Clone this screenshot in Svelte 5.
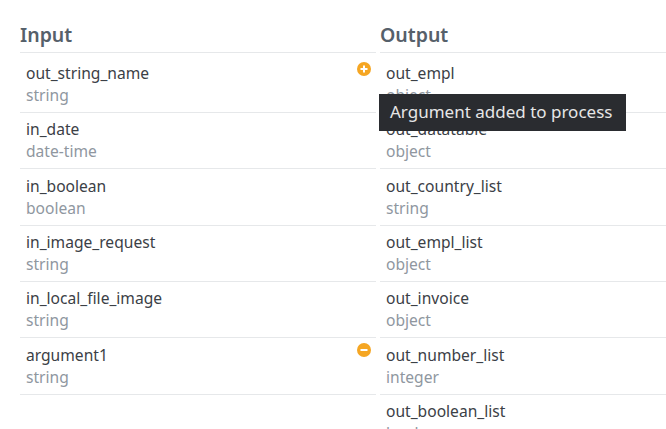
<script>
  const inputs = [
    { name: 'out_string_name', type: 'string', badge: 'plus' },
    { name: 'in_date', type: 'date-time' },
    { name: 'in_boolean', type: 'boolean' },
    { name: 'in_image_request', type: 'string' },
    { name: 'in_local_file_image', type: 'string' },
    { name: 'argument1', type: 'string', badge: 'minus' },
  ];
  const outputs = [
    { name: 'out_empl', type: 'object' },
    { name: 'out_datatable', type: 'object' },
    { name: 'out_country_list', type: 'string' },
    { name: 'out_empl_list', type: 'object' },
    { name: 'out_invoice', type: 'object' },
    { name: 'out_number_list', type: 'integer' },
    { name: 'out_boolean_list', type: 'boolean' },
  ];
</script>

{#snippet column(title, items)}
  <section class="col">
    <h2>{title}</h2>
    <ul>
      {#each items as item}
        <li>
          <div class="name">{item.name}</div>
          <div class="type">{item.type}</div>
          {#if item.badge}
            <svg class="badge" viewBox="0 0 14 14" width="14" height="14" aria-hidden="true">
              <circle cx="7" cy="7" r="7" fill="#f5a623" />
              {#if item.badge === 'plus'}
                <path d="M3.5 7h7M7 3.5v7" stroke="#fff" stroke-width="2" />
              {:else}
                <path d="M3.5 7h7" stroke="#fff" stroke-width="2" />
              {/if}
            </svg>
          {/if}
        </li>
      {/each}
    </ul>
  </section>
{/snippet}

<main class="page">
  {@render column('Input', inputs)}
  {@render column('Output', outputs)}
  <div class="tooltip">Argument added to process</div>
</main>

<style>
  :global(body) {
    margin: 0;
    background: #fff;
    overflow: hidden;
  }
  .page {
    position: relative;
    height: 429px;
    overflow: hidden;
    display: grid;
    grid-template-columns: 356px 306px;
    column-gap: 4px;
    padding-left: 20px;
    font-family: "Noto Sans", sans-serif;
    box-sizing: border-box;
  }
  .col {
    min-width: 0;
  }
  h2 {
    margin: 0;
    padding-top: 20px;
    height: 32px;
    font-size: 19.5px;
    line-height: 29px;
    font-weight: 600;
    color: #56606a;
    border-bottom: 1px solid #e6e8ea;
  }
  ul {
    list-style: none;
    margin: 0;
    padding: 0;
  }
  li {
    position: relative;
    height: 55.33px;
    padding-left: 6px;
    border-bottom: 1px solid #e6e8ea;
  }
  li:first-child {
    box-sizing: border-box;
    height: 60px;
    padding-top: 4px;
  }
  .name {
    padding-top: 5.45px;
    font-size: 15.6px;
    line-height: 22px;
    color: #3b4046;
  }
  .type {
    font-size: 15.6px;
    line-height: 22px;
    color: #8f979f;
  }
  .badge {
    position: absolute;
    right: 5px;
    top: 5px;
  }
  li:first-child .badge {
    top: 9px;
  }
  .tooltip {
    position: absolute;
    left: 379px;
    top: 94px;
    width: 247px;
    height: 37px;
    box-sizing: border-box;
    padding-left: 11px;
    background: #2a2c30;
    color: #e6e6e6;
    font-size: 17px;
    line-height: 36px;
    white-space: nowrap;
  }
</style>
